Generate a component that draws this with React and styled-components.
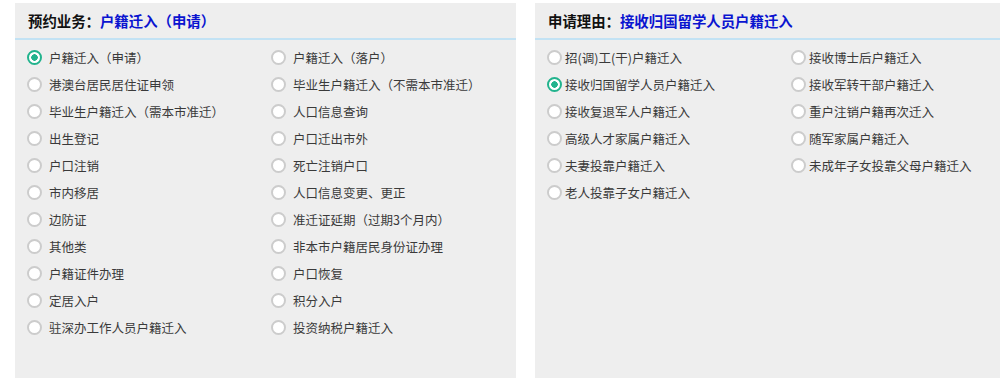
import styled, { createGlobalStyle } from "styled-components";

const leftItems = [
  "户籍迁入（申请）",
  "户籍迁入（落户）",
  "港澳台居民居住证申领",
  "毕业生户籍迁入（不需本市准迁）",
  "毕业生户籍迁入（需本市准迁）",
  "人口信息查询",
  "出生登记",
  "户口迁出市外",
  "户口注销",
  "死亡注销户口",
  "市内移居",
  "人口信息变更、更正",
  "边防证",
  "准迁证延期（过期3个月内）",
  "其他类",
  "非本市户籍居民身份证办理",
  "户籍证件办理",
  "户口恢复",
  "定居入户",
  "积分入户",
  "驻深办工作人员户籍迁入",
  "投资纳税户籍迁入",
];

const rightItems = [
  "招(调)工(干)户籍迁入",
  "接收博士后户籍迁入",
  "接收归国留学人员户籍迁入",
  "接收军转干部户籍迁入",
  "接收复退军人户籍迁入",
  "重户注销户籍再次迁入",
  "高级人才家属户籍迁入",
  "随军家属户籍迁入",
  "夫妻投靠户籍迁入",
  "未成年子女投靠父母户籍迁入",
  "老人投靠子女户籍迁入",
];

const App = () => {
  return (
    <>
      <GlobalStyle />
      <Page>
        <Panel>
          <Header>
            预约业务：<Highlight>户籍迁入（申请）</Highlight>
          </Header>
          <Options>
            {leftItems.map((item, i) => (
              <Option key={item} $gap={7}>
                <Radio $checked={i === 0} />
                {item}
              </Option>
            ))}
          </Options>
        </Panel>
        <Panel>
          <Header>
            申请理由：<Highlight>接收归国留学人员户籍迁入</Highlight>
          </Header>
          <Options>
            {rightItems.map((item, i) => (
              <Option key={item} $gap={3}>
                <Radio $checked={i === 2} />
                {item}
              </Option>
            ))}
          </Options>
        </Panel>
      </Page>
    </>
  );
};

const GlobalStyle = createGlobalStyle`
  html, body {
    margin: 0;
    background: #ffffff;
    overflow: hidden;
  }
  body {
    font-family: "Noto Sans CJK SC", "Liberation Sans", sans-serif;
  }
`;

const Page = styled.div`
  display: flex;
  gap: 19px;
  padding: 3px 0 0 15px;
  height: 375px;
`;

const Panel = styled.div`
  flex: 0 0 501px;
  background-color: #eeeeee;
`;

const Header = styled.div`
  height: 35px;
  line-height: 35px;
  padding-left: 13px;
  border-bottom: 2px solid #c2e2f4;
  font-size: 14.4px;
  font-weight: bold;
  color: #111111;
`;

const Highlight = styled.span`
  color: #0a14d0;
`;

const Options = styled.div`
  display: grid;
  grid-template-columns: 244px 244px;
  padding: 4px 0 0 12px;
`;

const Option = styled.label`
  display: flex;
  align-items: center;
  gap: ${(p) => p.$gap}px;
  height: 27px;
  font-size: 12.5px;
  color: #3a3a3a;
  white-space: nowrap;
`;

const Radio = styled.span`
  flex: 0 0 auto;
  box-sizing: border-box;
  width: 15px;
  height: 15px;
  border-radius: 50%;
  border: 2px solid ${(p) => (p.$checked ? "#22b38d" : "#cccccc")};
  background: ${(p) =>
    p.$checked
      ? "radial-gradient(circle, #22b38d 0 3px, #ffffff 3.5px)"
      : "#ffffff"};
`;

export default App;
